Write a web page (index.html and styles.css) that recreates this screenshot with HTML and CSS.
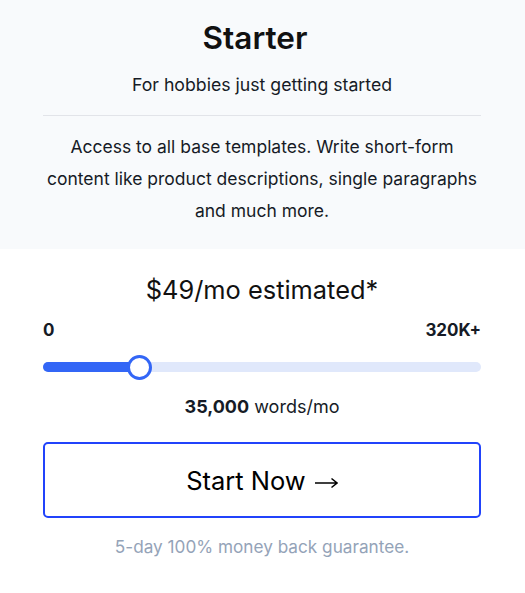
FILE: index.html
```html
<!DOCTYPE html>
<html lang="en">
<head>
  <meta charset="UTF-8">
  <title>Starter plan</title>
  <link rel="stylesheet" href="styles.css">
</head>
<body>

  <div class="plan-top">
    <h2 class="plan-name">Starter</h2>
    <p class="plan-tagline">For hobbies just getting started</p>
    <div class="plan-desc">Access to all base templates. Write short-form content like product descriptions, single paragraphs and much more.</div>
  </div>

  <div class="plan-bottom">
    <div class="price">$49/mo estimated*</div>
    <div class="range-labels">
      <span>0</span>
      <span>320K+</span>
    </div>
    <div class="track">
      <div class="fill" style="width: 22.1%;"></div>
      <div class="thumb" style="left: 22.1%;"></div>
    </div>
    <div class="words"><b>35,000</b> words/mo</div>
    <button class="start-btn">Start Now
      <svg class="arrow" width="24" height="12" viewBox="0 0 24 12" fill="none" stroke="#000" stroke-width="1.5">
        <path d="M1 6h22M17.5 1.5 23 6l-5.5 4.5"/>
      </svg>
    </button>
    <div class="guarantee">5-day 100% money back guarantee.</div>
  </div>

</body>
</html>
```

FILE: styles.css
```css
body {
  font-family: Inter, "Noto Sans", sans-serif;
  margin: 0;
  background: #fff;
  color: #161b26;
}
.plan-top {
  background: #f8fafc;
  padding: 20px 44px 22px 43px;
  text-align: center;
}
.plan-name {
  font-size: 31.5px;
  font-weight: 600;
  line-height: 36px;
  margin: 0;
  padding-right: 14px;
  color: #111;
}
.plan-tagline {
  font-size: 17.7px;
  line-height: 26px;
  margin: 16px 0 0;
  padding-bottom: 17px;
  border-bottom: 1px solid #e2e4e9;
}
.plan-desc {
  font-size: 17.5px;
  line-height: 32px;
  margin-top: 15px;
  padding: 0 2px;
}
.plan-bottom {
  padding: 25px 44px 0 43px;
  text-align: center;
}
.price {
  font-size: 25.4px;
  line-height: 32px;
  color: #111;
}
.range-labels {
  display: flex;
  justify-content: space-between;
  font-size: 17px;
  font-weight: 700;
  line-height: 20px;
  margin-top: 14px;
}
.track {
  position: relative;
  height: 10px;
  background: #e0e8fb;
  border-radius: 5px;
  margin-top: 22px;
}
.fill {
  height: 100%;
  background: #3366f6;
  border-radius: 5px;
}
.thumb {
  position: absolute;
  top: 50%;
  width: 19px;
  height: 19px;
  margin: -12.5px 0 0 -12.5px;
  background: #fff;
  border: 3px solid #3366f6;
  border-radius: 50%;
}
.words {
  font-size: 18px;
  line-height: 24px;
  margin-top: 23px;
}
.start-btn {
  display: block;
  width: 100%;
  height: 76px;
  margin-top: 23px;
  background: #fff;
  border: 2px solid #2143fb;
  border-radius: 5px;
  font-family: inherit;
  font-size: 25.5px;
  color: #000;
  cursor: pointer;
}
.arrow {
  vertical-align: middle;
  margin-left: 1px;
}
.guarantee {
  font-size: 17.2px;
  line-height: 24px;
  color: #94a3b8;
  margin-top: 17px;
}
```
